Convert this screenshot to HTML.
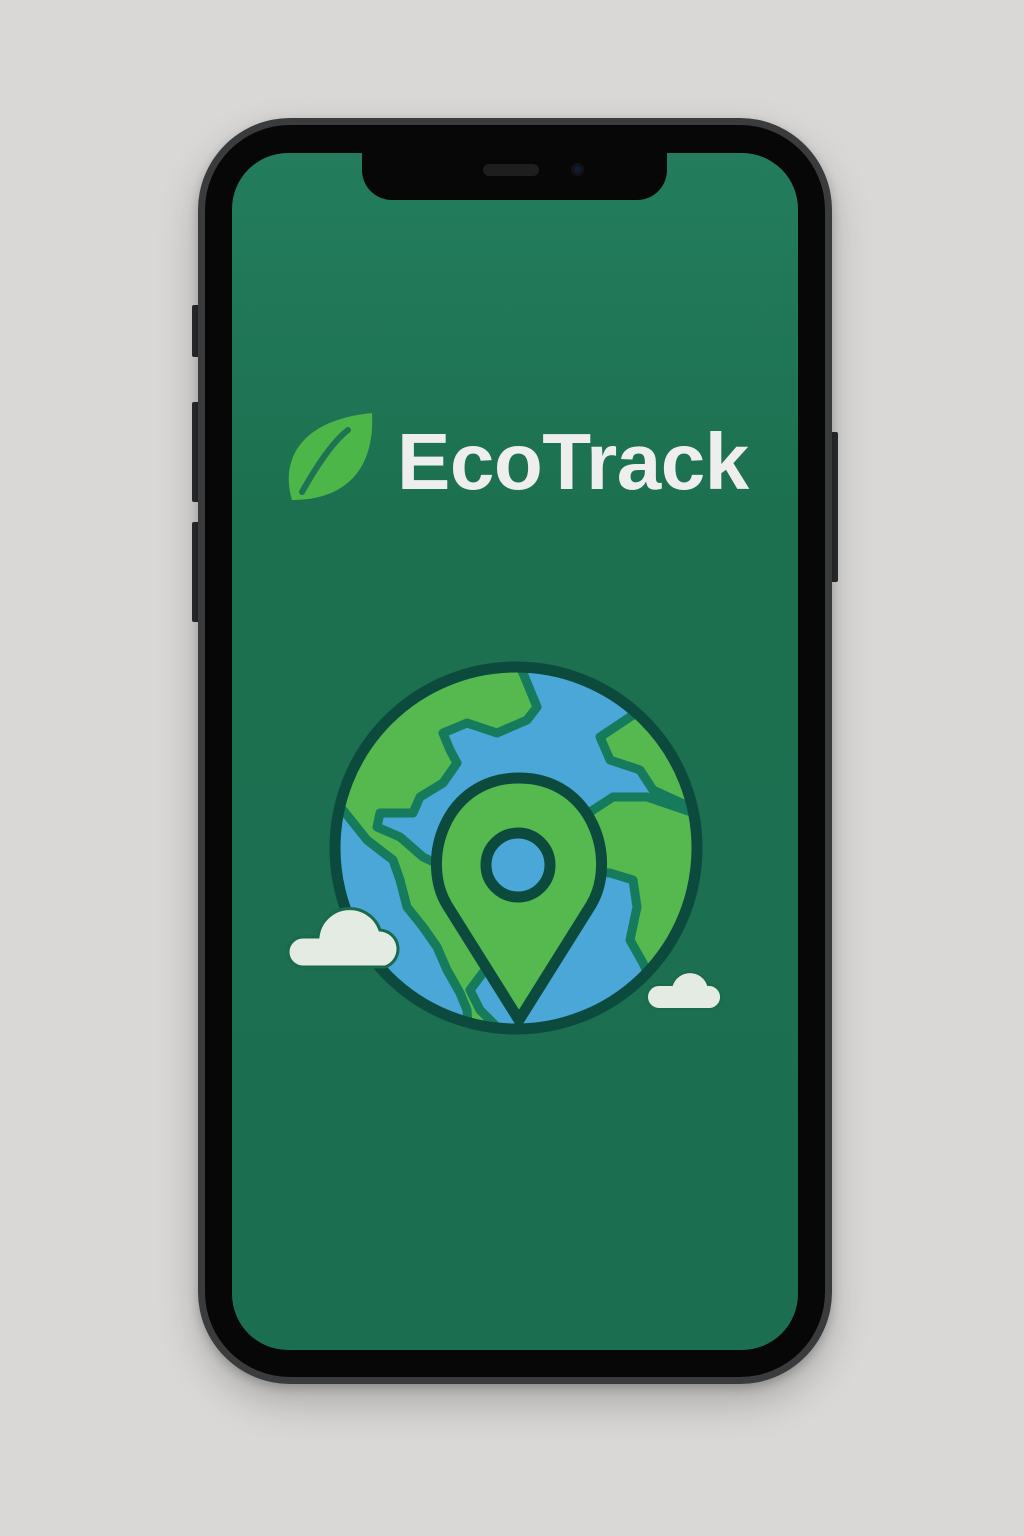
<!DOCTYPE html>
<html><head><style>
html,body{margin:0;padding:0}
body{width:1024px;height:1536px;background:#d9d8d6;position:relative;overflow:hidden;font-family:"Liberation Sans",sans-serif}
.phone{position:absolute;left:198px;top:118px;width:634px;height:1266px;border-radius:92px;background:#3a3b3d;box-shadow:0 18px 40px rgba(0,0,0,.22),0 4px 10px rgba(0,0,0,.2)}
.inner{position:absolute;left:7px;top:7px;right:7px;bottom:7px;border-radius:85px;background:#070707}
.screen{position:absolute;left:232px;top:153px;width:566px;height:1197px;border-radius:56px;background:linear-gradient(#237d5d,#1c7050 30%,#1b6e50);overflow:hidden}
.notch{position:absolute;left:362px;top:140px;width:305px;height:60px;background:#070707;border-radius:0 0 30px 30px}
.btn{position:absolute;background:#2b2c2e;border-radius:2px}
.title{position:absolute;left:397px;top:416px;font-size:80px;font-weight:bold;color:#eeeeee;letter-spacing:-0.5px}
</style></head><body>
<div class="btn" style="left:192px;top:305px;width:8px;height:52px"></div>
<div class="btn" style="left:192px;top:402px;width:8px;height:100px"></div>
<div class="btn" style="left:192px;top:522px;width:8px;height:100px"></div>
<div class="btn" style="left:830px;top:432px;width:8px;height:150px"></div>
<div class="phone"><div class="inner"></div></div>
<div class="screen"></div>
<div class="notch"></div>
<div style="position:absolute;left:483px;top:164px;width:56px;height:12px;border-radius:6px;background:#1e1e1e"></div>
<div style="position:absolute;left:571px;top:163px;width:13px;height:13px;border-radius:50%;background:#0d1a3a;box-shadow:inset 0 0 0 3px #111"></div>
<svg style="position:absolute;left:0;top:0" width="1024" height="1536">
<path d="M292 500 C280 460 300 420 372 413 C375 470 345 500 292 500Z" fill="#4cb748"/>
<path d="M302 492 C320 460 335 440 348 430" stroke="#1e7352" stroke-width="6" fill="none" stroke-linecap="round"/>
<defs><clipPath id="g"><circle cx="516" cy="848" r="178"/></clipPath></defs>
<circle cx="516" cy="848" r="178" fill="#55b94f"/>
<g clip-path="url(#g)" fill="#4aa7d7" stroke="#167a5c" stroke-width="9" stroke-linejoin="round">
<path d="M515 655 L523 673 L537 707 L527 720 L497 733 L467 723 L443 733 L450 750 L457 763 L443 783 L420 797 L413 813 L380 813 L377 827 L400 837 L423 857 L450 870 L520 860 L593 810 L613 797 L647 797 L700 815 L710 805 L690 807 L653 790 L640 770 L610 760 L600 737 L630 717 L660 700 L600 655 Z"/>
<path d="M560 870 L610 873 L633 880 L637 907 L630 940 L643 963 L660 1000 L620 1050 L520 1050 L480 1010 L470 990 Z"/>
<path d="M320 805 L343 810 L367 840 L393 860 L400 880 L407 907 L423 927 L437 947 L447 970 L460 993 L467 1010 L470 1060 L320 1060 Z"/>
</g>
<circle cx="516" cy="848" r="181" fill="none" stroke="#0c4a3e" stroke-width="11"/>
<path d="M519 1020 L447 905 C420 860 445 778 519 778 C593 778 618 860 591 905 Z" fill="#55b94f" stroke="#0c4a3e" stroke-width="11" stroke-linejoin="round"/>
<circle cx="518" cy="865" r="32" fill="#4aa7d7" stroke="#0c4a3e" stroke-width="11"/>
<path d="M303 967 A15 15 0 0 1 303 937 L318 937 A32 32 0 0 1 380 930 A19 19 0 0 1 385 967 Z" fill="#e4ebe3" stroke="#1a6a4e" stroke-width="3"/>
<path d="M659 1009 A12 12 0 0 1 659 985 L672 985 A19 19 0 0 1 708 985 A12 12 0 0 1 710 1009 Z" fill="#e4ebe3" stroke="#1a6a4e" stroke-width="2"/>
</svg>
<div class="title">EcoTrack</div>
</body></html>
